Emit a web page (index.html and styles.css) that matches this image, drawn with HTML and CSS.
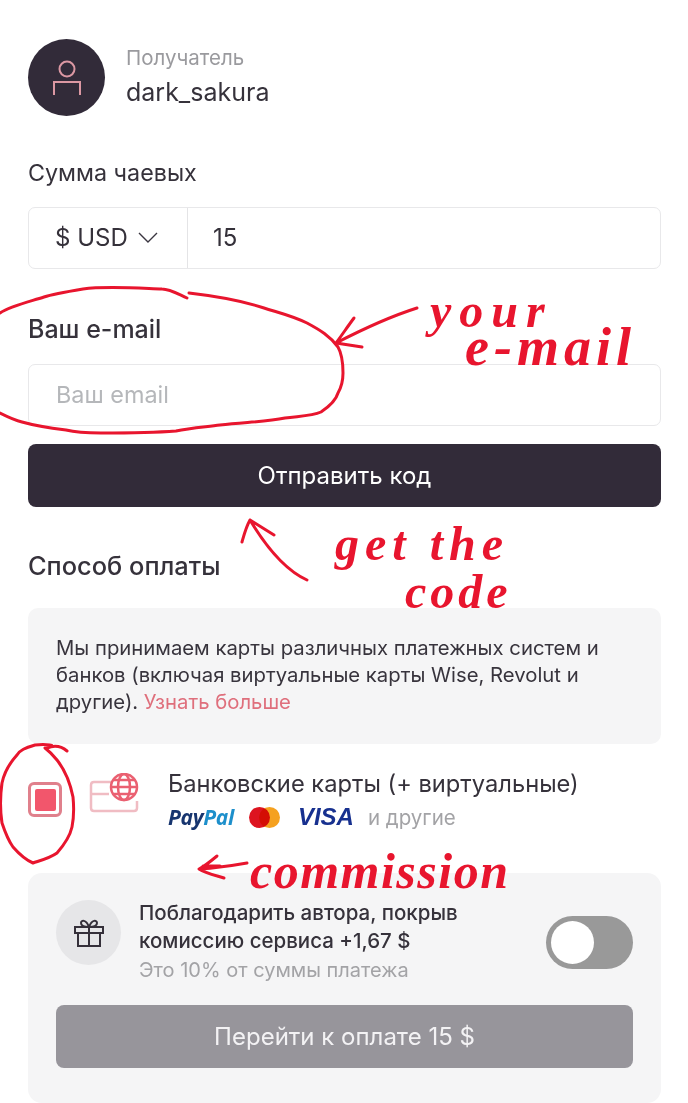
FILE: index.html
```html
<!doctype html>
<html lang="ru">
<head>
<meta charset="utf-8">
<title>Чаевые</title>
<link rel="stylesheet" href="styles.css">
</head>
<body>
<div class="page">
	<div class="recipient">
		<div class="avatar">
			<svg width="28" height="36" viewBox="0 0 28 36" fill="none" stroke="#dc98a3" stroke-width="2"><circle cx="14" cy="9" r="7.5"/><path d="M1 35V22H27V35"/></svg>
		</div>
		<div class="recipient-text">
			<p class="recipient-label">Получатель</p>
			<p class="recipient-name">dark_sakura</p>
		</div>
	</div>

	<h3 class="title">Сумма чаевых</h3>
	<div class="field amount">
		<div class="currency">$ USD
			<svg width="20" height="11" viewBox="0 0 20 11" fill="none" stroke="#3a3640" stroke-width="1.4"><path d="M1 1L10 10L19 1"/></svg>
		</div>
		<div class="value">15</div>
	</div>

	<h3 class="title title-strong">Ваш e-mail</h3>
	<div class="field placeholder">Ваш email</div>
	<div class="btn btn-dark">Отправить код</div>

	<h3 class="title title-strong title-pay">Способ оплаты</h3>
	<div class="info">Мы принимаем карты различных платежных систем и банков (включая виртуальные карты Wise, Revolut и другие). <span class="link">Узнать больше</span></div>

	<div class="method">
		<div class="radio"><span></span></div>
		<svg class="card-icon" width="50" height="40" viewBox="0 0 50 40" fill="none" stroke="#f0bcc3" stroke-width="2.5">
			<path d="M24 9H5Q2 9 2 12V35Q2 38 5 38H45Q48 38 48 35V28"/>
			<path d="M2 21H20"/>
			<g stroke="#ea6071"><circle cx="35" cy="14" r="13"/><ellipse cx="35" cy="14" rx="6" ry="13"/><path d="M22 14H48M24 7H46M24 21H46"/></g>
		</svg>
		<div>
			<p class="method-name">Банковские карты (+ виртуальные)</p>
			<div class="brands">
				<span class="paypal">Pay<i>Pal</i></span>
				<span class="mc"><b></b><b></b></span>
				<span class="visa">VISA</span>
				<span class="others">и другие</span>
			</div>
		</div>
	</div>

	<div class="tip">
		<div class="tip-row">
			<div class="gift">
				<svg width="30" height="28" viewBox="0 0 30 28" fill="none" stroke="#35303a" stroke-width="2"><rect x="1" y="8" width="28" height="6"/><path d="M4 14V27H26V14M15 8V27M15 8C9 8 7 6 7 4C7 1 12 0 15 8C18 0 23 1 23 4C23 6 21 8 15 8Z"/></svg>
			</div>
			<div class="tip-text">
				<p class="tip-title">Поблагодарить автора, покрыв комиссию сервиса +1,67 $</p>
				<p class="tip-sub">Это 10% от суммы платежа</p>
			</div>
			<div class="toggle"><span></span></div>
		</div>
		<div class="btn btn-grey">Перейти к оплате 15 $</div>
	</div>
</div>

<!-- красные пометки поверх скриншота -->
<svg class="marks" width="688" height="1103" viewBox="0 0 688 1103" fill="none" stroke="#e8152e" stroke-width="3" stroke-linejoin="round" stroke-linecap="round">
	<path d="M187 298C178 294 170 289 162 289C135 288 105 286 83 289C65 292 50 295 44 297C28 302 10 306 0 313"/>
	<path d="M0 413C8 417 14 420 22 422C36 426 50 428 66 430C78 433 90 433 101 433C125 433 150 433 176 431C190 428 205 427 220 425C245 422 265 422 285 418C300 416 312 416 321 412C330 406 336 400 338 393C342 386 343 380 343 373C343 362 342 354 338 347C330 336 320 330 307 323C293 316 280 313 264 308C240 300 215 296 189 293"/>
	<path d="M417 308C395 315 365 328 336 343M354 318C348 326 342 335 336 343L362 347"/>
	<path d="M307 580C285 570 265 545 250 520M242 542C244 535 246 527 250 520C258 525 266 530 274 535"/>
	<path d="M67 751C60 745 52 746 47 748C60 745 45 744 35 745C25 748 20 750 17 755C8 765 4 773 2 783C0 797 0 810 2 823C5 832 8 840 13 847C20 855 26 860 33 863C42 860 50 858 57 853C64 845 70 836 72 827C74 817 74 807 73 797C70 782 65 770 57 760C53 755 49 751 45 748"/>
	<path d="M247 863C230 866 215 868 199 869M217 856C211 861 205 866 199 869C205 873 214 875 224 878M203 866L220 866"/>
</svg>
<span class="note note-mail">your<br><span class="note-indent">e-mail</span></span>
<span class="note note-code">get the<br><span class="note-indent">code</span></span>
<span class="note note-comm">commission</span>
</body>
</html>
```

FILE: styles.css
```css
html,body,p,h3{margin:0;padding:0}
body{width:688px;height:1103px;overflow:hidden;position:relative;background:#fff;color:#35313a;font-family:Inter,"Noto Sans",sans-serif}
.page{padding:39px 27px 0 28px}

.recipient{display:flex;align-items:center;gap:21px;height:77px}
.avatar{width:77px;height:77px;border-radius:50%;background:#322b39;display:flex;align-items:center;justify-content:center}
.recipient-text{margin-top:-1px}
.recipient-label{font-size:20.5px;line-height:24px;color:#9a9a9e}
.recipient-name{font-size:25px;line-height:32px;margin-top:6px;color:#36323b}

.title{font-size:23.3px;line-height:28px;font-weight:400;color:#36323b;margin-top:43px}
.title-strong{font-size:25px;font-weight:500;margin-top:46px}
.title-pay{font-size:25.4px;margin-top:45px}

.field{height:62px;box-sizing:border-box;border:1.5px solid #e8e8ea;border-radius:7px;display:flex;align-items:center;font-size:24px;margin-top:20px}
.currency{width:159px;height:100%;box-sizing:border-box;border-right:1.5px solid #e4e4e6;padding:0 0 2px 26px;display:flex;align-items:center;gap:10px}
.value{padding:0 0 2px 25px}
.placeholder{padding:0 0 2px 27px;color:#b5b7ba;font-size:23.4px;margin-top:21px}

.btn{height:63px;border-radius:8px;display:flex;align-items:center;justify-content:center;font-size:24px;color:#fff}
.btn-dark{background:#322b39;margin-top:18px}
.btn-grey{background:#97959b;color:#f3f2f4}

.info{background:#f5f5f6;border-radius:10px;margin-top:28px;height:136px;box-sizing:border-box;padding:26px 28px 0;font-size:20.3px;line-height:27px;color:#38343d}
.link{color:#df6f7c}

.method{display:flex;align-items:flex-start;height:129px;box-sizing:border-box;padding-top:26px}
.radio{width:34px;height:35px;box-sizing:border-box;border:3px solid #e0808c;border-radius:6px;display:flex;align-items:center;justify-content:center;margin:12px 27px 0 0}
.radio span{width:21px;height:22px;background:#f2566c;border-radius:2px}
.card-icon{margin:3px 29px 0 0}
.method-name{font-size:23.7px;line-height:28px;color:#36323b}
.brands{display:flex;align-items:center;margin-top:5px;height:28px}
.paypal{font:italic 700 21px "Open Sans",sans-serif;color:#17356f;letter-spacing:-.3px}
.paypal i{color:#1d8fcb}
.mc{display:flex;margin-left:15px}
.mc b{width:21px;height:21px;border-radius:50%;background:#dd1420}
.mc b+b{background:#f5a11f;margin-left:-11px;mix-blend-mode:multiply}
.visa{font:italic 700 24px "Liberation Sans",sans-serif;color:#17308f;margin-left:18px}
.others{font-size:20.5px;color:#a3a3a6;margin-left:14px}

.tip{background:#f5f5f6;border-radius:14px;height:230px;box-sizing:border-box;padding:27px 28px 0}
.tip-row{display:flex;align-items:flex-start;height:105px}
.gift{width:65px;height:65px;border-radius:50%;background:#e6e6e8;display:flex;align-items:center;justify-content:center;flex:none}
.tip-text{flex:1;padding-left:18px;margin-top:-1px}
.tip-title{font-size:20.5px;line-height:28px;font-weight:500;color:#36323b;width:340px}
.tip-sub{font-size:20px;line-height:28px;color:#a3a3a6;margin-top:1px}
.toggle{width:87px;height:53px;border-radius:27px;background:#999;margin-top:16px;padding:5px;box-sizing:border-box;flex:none}
.toggle span{display:block;width:43px;height:43px;border-radius:50%;background:#fff}

.marks{position:absolute;left:0;top:0}
.note{position:absolute;font:italic 700 48px/36px "Liberation Serif",serif;color:#e8152e;white-space:nowrap}
.note-mail{left:430px;top:293px;letter-spacing:8px}
.note-mail .note-indent{margin-left:35px;font-size:54px;letter-spacing:5px}
.note-code{left:335px;top:520px;letter-spacing:6px;line-height:48px}
.note-code .note-indent{margin-left:70px;letter-spacing:4px}
.note-comm{left:250px;top:843px;font-size:50px;line-height:56px;letter-spacing:1.5px}
```
